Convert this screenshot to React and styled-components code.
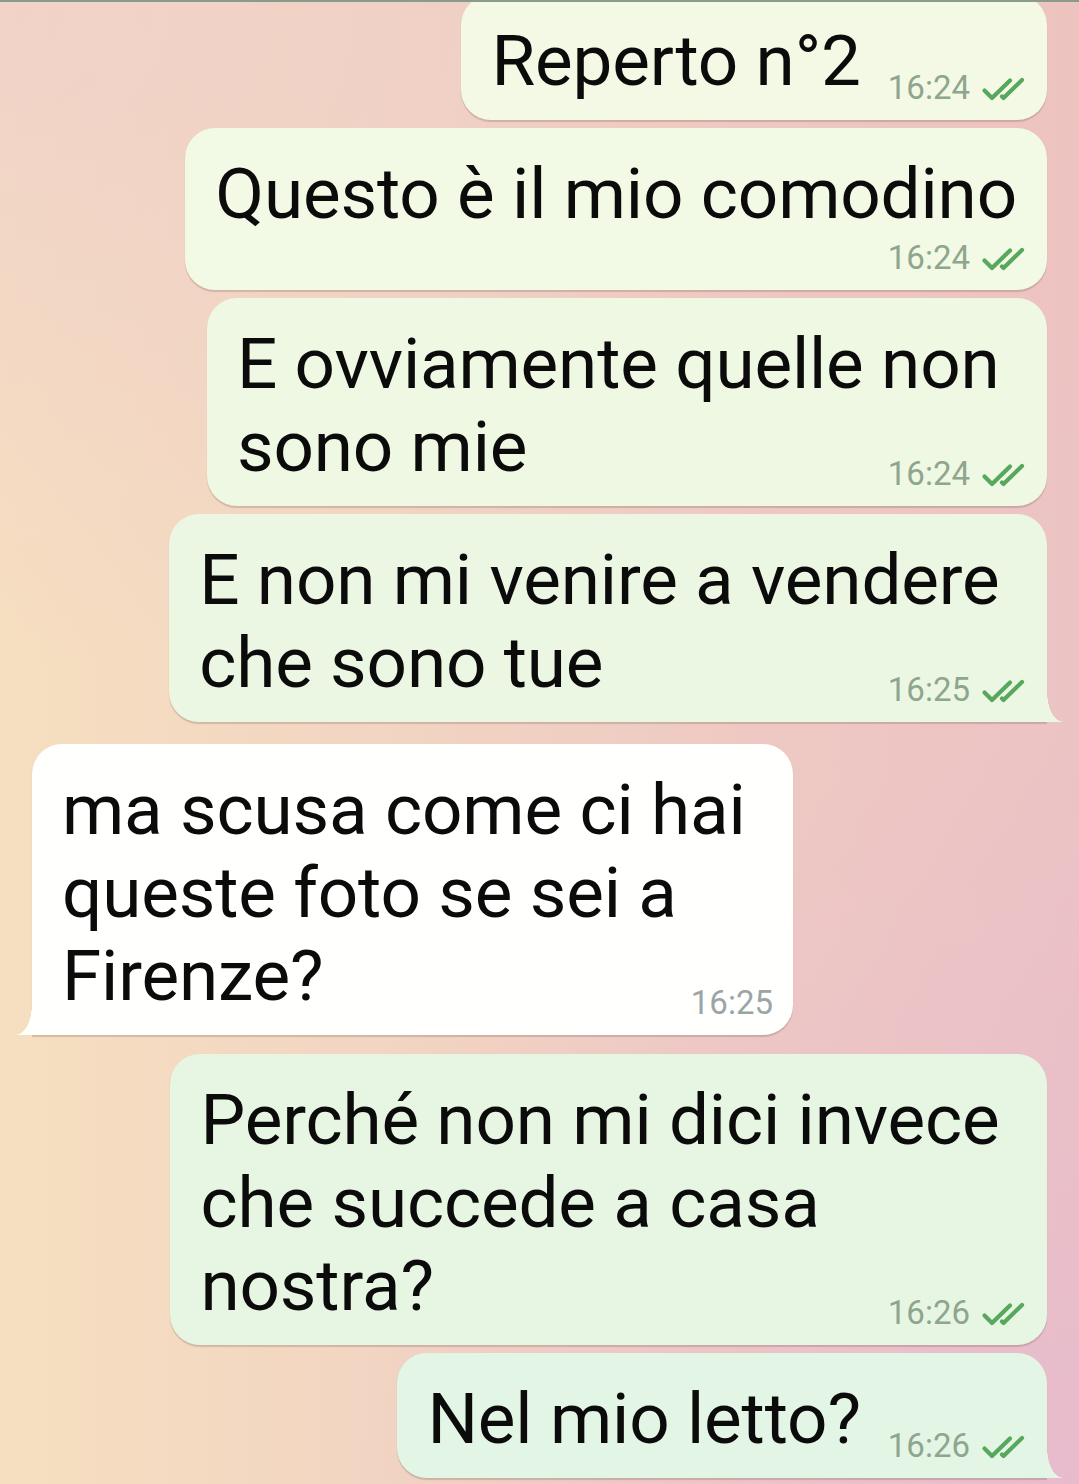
import React from "react";
import styled, { createGlobalStyle, css } from "styled-components";

const GlobalStyle = createGlobalStyle`
  html, body { margin: 0; padding: 0; }
  body {
    width: 1079px;
    height: 1484px;
    overflow: hidden;
    font-family: Roboto, "Noto Sans", "Liberation Sans", sans-serif;
    -webkit-font-smoothing: antialiased;
  }
`;

const Screen = styled.div`
  width: 1079px;
  height: 1484px;
  display: flex;
  flex-direction: column;
  overflow: hidden;
  background:
    radial-gradient(ellipse 70% 45% at 0% 0%, rgba(236, 200, 206, 0.55), rgba(236, 200, 206, 0) 100%),
    radial-gradient(ellipse 70% 50% at 100% 100%, rgba(226, 178, 214, 0.45), rgba(226, 178, 214, 0) 100%),
    radial-gradient(ellipse 60% 40% at 100% 0%, rgba(238, 196, 186, 0.5), rgba(238, 196, 186, 0) 100%),
    linear-gradient(to right, #f6dfc0 0%, #f2d5c2 35%, #eec9c3 70%, #ecc3c4 100%);
`;

const TopEdge = styled.div`
  height: 2px;
  flex-shrink: 0;
  background: #8a9a8b;
  position: relative;
  z-index: 2;
`;

const Viewport = styled.div`
  flex: 1;
  overflow: hidden;
`;

const Thread = styled.div`
  display: flex;
  flex-direction: column;
  margin-top: -7px;
  padding: 0 32px;
`;

const Row = styled.div`
  display: flex;
  justify-content: ${(p) => (p.$out ? "flex-end" : "flex-start")};
  margin-top: ${(p) => p.$gap}px;
`;

const tailOut = css`
  border-bottom-right-radius: 0;
  &::after {
    content: "";
    position: absolute;
    right: -16px;
    bottom: 0;
    width: 16px;
    height: 30px;
    background: ${(p) => p.$bg};
    -webkit-mask-image: radial-gradient(ellipse 16px 30px at 100% 0, transparent 98%, #000 100%);
    mask-image: radial-gradient(ellipse 16px 30px at 100% 0, transparent 98%, #000 100%);
  }
`;

const tailIn = css`
  border-bottom-left-radius: 0;
  &::before {
    content: "";
    position: absolute;
    left: -16px;
    bottom: 0;
    width: 16px;
    height: 30px;
    background: ${(p) => p.$bg};
    -webkit-mask-image: radial-gradient(ellipse 16px 30px at 0 0, transparent 98%, #000 100%);
    mask-image: radial-gradient(ellipse 16px 30px at 0 0, transparent 98%, #000 100%);
  }
`;

const Bubble = styled.div`
  position: relative;
  background: ${(p) => p.$bg};
  border-radius: 30px;
  padding: 24px 20px 18px 30px;
  box-shadow: 0 1.5px 1px rgba(90, 70, 60, 0.22);
  ${(p) => (p.$tail ? (p.$out ? tailOut : tailIn) : "")}
`;

const Line = styled.div`
  font-size: 71px;
  line-height: 83px;
  letter-spacing: -0.15px;
  color: #0b0b0b;
  white-space: pre;
  padding-right: 10px;
`;

const LastRow = styled.div`
  display: flex;
  align-items: flex-end;
  gap: 27px;
`;

const LastText = styled(Line)`
  padding-right: 0;
`;

const MetaRow = styled.div`
  display: flex;
  justify-content: flex-end;
  margin-top: 7px;
`;

const Meta = styled.div`
  display: inline-flex;
  align-items: center;
  gap: 11px;
  margin-left: auto;
  margin-bottom: -2px;
  font-size: 33px;
  line-height: 32px;
  color: ${(p) => (p.$out ? "#8ea58e" : "#9ba5a6")};
  white-space: nowrap;
`;

const TickSvg = styled.svg`
  width: 46px;
  height: 24px;
  flex-shrink: 0;
  margin-top: 1px;
`;

function Ticks() {
  return (
    <TickSvg viewBox="0 0 46 24" fill="none" stroke="#57a85c" strokeWidth="4.2" strokeLinecap="round" strokeLinejoin="round">
      <path d="M3.5 13.5 L11 21 L29 3.5" />
      <path d="M21 19.5 L22.5 21 L41 3" />
    </TickSvg>
  );
}

const messages = [
  { out: true, gap: 0, bg: "#f3f9e5", lines: ["Reperto n°2"], time: "16:24" },
  { out: true, gap: 8, bg: "#f2f9e4", lines: ["Questo è il mio comodino"], time: "16:24", stacked: true },
  { out: true, gap: 8, bg: "#eff8e3", lines: ["E ovviamente quelle non", "sono mie"], time: "16:24" },
  { out: true, gap: 8, bg: "#ecf7e3", lines: ["E non mi venire a vendere", "che sono tue"], time: "16:25", tail: true },
  { out: false, gap: 22, bg: "#fffffd", lines: ["ma scusa come ci hai", "queste foto se sei a", "Firenze?"], time: "16:25", tail: true },
  { out: true, gap: 19, bg: "#e6f6e3", lines: ["Perché non mi dici invece", "che succede a casa", "nostra?"], time: "16:26" },
  { out: true, gap: 8, bg: "#e3f5e4", lines: ["Nel mio letto?"], time: "16:26", tail: true },
];

function MetaInfo({ out, time }) {
  return (
    <Meta $out={out}>
      <span>{time}</span>
      {out && <Ticks />}
    </Meta>
  );
}

function Message({ m }) {
  const head = m.lines.slice(0, -1);
  const last = m.lines[m.lines.length - 1];
  return (
    <Row $out={m.out} $gap={m.gap}>
      <Bubble $out={m.out} $bg={m.bg} $tail={m.tail}>
        {head.map((l, i) => (
          <Line key={i}>{l + " "}</Line>
        ))}
        {m.stacked ? (
          <>
            <Line>{last}</Line>
            <MetaRow>
              <MetaInfo out={m.out} time={m.time} />
            </MetaRow>
          </>
        ) : (
          <LastRow>
            <LastText>{last}</LastText>
            <MetaInfo out={m.out} time={m.time} />
          </LastRow>
        )}
      </Bubble>
    </Row>
  );
}

export default function App() {
  return (
    <>
      <GlobalStyle />
      <Screen>
        <TopEdge />
        <Viewport>
          <Thread>
            {messages.map((m, i) => (
              <Message key={i} m={m} />
            ))}
          </Thread>
        </Viewport>
      </Screen>
    </>
  );
}
